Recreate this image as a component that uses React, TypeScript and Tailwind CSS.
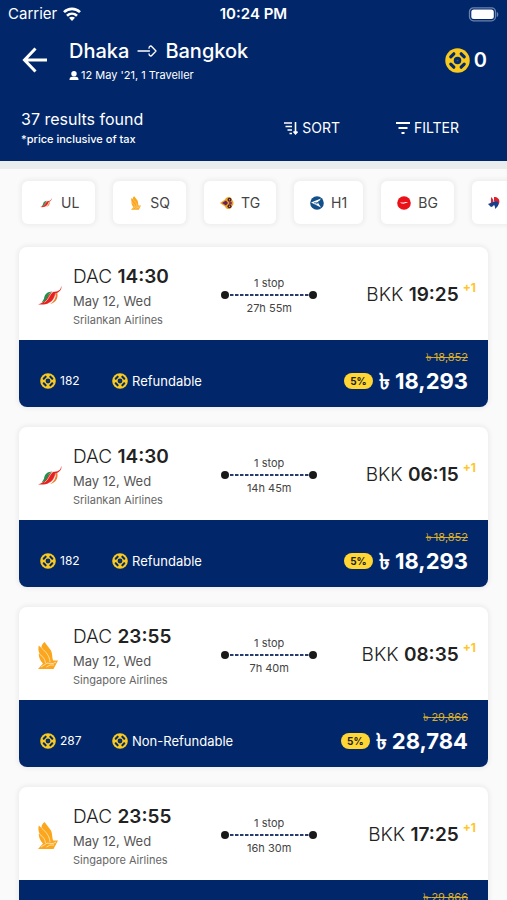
import React from "react";

type Flight = {
  id: number;
  airline: "Srilankan Airlines" | "Singapore Airlines";
  departs: string;
  arrives: string;
  duration: string;
  points: string;
  refund: string;
  oldPrice: string;
  price: string;
};

const flights: Flight[] = [
  { id: 1, airline: "Srilankan Airlines", departs: "14:30", arrives: "19:25", duration: "27h 55m", points: "182", refund: "Refundable", oldPrice: "18,852", price: "18,293" },
  { id: 2, airline: "Srilankan Airlines", departs: "14:30", arrives: "06:15", duration: "14h 45m", points: "182", refund: "Refundable", oldPrice: "18,852", price: "18,293" },
  { id: 3, airline: "Singapore Airlines", departs: "23:55", arrives: "08:35", duration: "7h 40m", points: "287", refund: "Non-Refundable", oldPrice: "29,866", price: "28,784" },
  { id: 4, airline: "Singapore Airlines", departs: "23:55", arrives: "17:25", duration: "16h 30m", points: "287", refund: "Non-Refundable", oldPrice: "29,866", price: "28,784" },
];

function Coin({ className }: { className: string }) {
  return (
    <svg viewBox="0 0 26 26" className={className} aria-hidden="true">
      <circle cx="13" cy="13" r="12.7" fill="#f9c920" />
      <circle cx="13" cy="13" r="3.9" fill="#032a6b" />
      <g stroke="#032a6b" strokeWidth="3.3" strokeLinecap="round">
        <path d="M6 9.2 9.2 6M16.8 6 20 9.2M20 16.8 16.8 20M9.2 20 6 16.8" />
      </g>
      <circle cx="13" cy="13" r="0.9" fill="#3d5276" />
    </svg>
  );
}

function SrilankanLogo({ className }: { className: string }) {
  return (
    <svg viewBox="0 0 26 22" className={className} aria-hidden="true">
      <path d="M25 0C25 4 23 6 18 6.500 12 7 11 11 8 15 6 18 3 19 0 20c8 1 14-1 17-6 2-4 2-6 5-7 3-2 4-4 3-7Z" fill="#e42320" />
      <path d="M16 6C10 6 7 9 6.500 14L4 18c4-1 6-4 7-7 1-3 3-4 5-5Z" fill="#219150" />
      <path d="M19 8c1 5-2 9-6 12 6-2 9-6 8-12Z" fill="#f0792b" />
      <path d="M16 7c-4 2-4 8-9 11" fill="none" stroke="#fff" strokeWidth="0.6" />
      <path d="M19 8c-1 5-3 9-8 11" fill="none" stroke="#fff" strokeWidth="0.4" />
    </svg>
  );
}

function SingaporeLogo({ className }: { className: string }) {
  return (
    <svg viewBox="0 0 20 27" className={className} aria-hidden="true">
      <path d="M6.500 0 13 8.500C14.500 12 14 15 15 18.500l5 0L15.500 27H0l5-5.500C2.500 19 .5 15 .8 11.500L2 12.500C.3 9.500 0 6.500.8 3.500L3.500 6C3.300 3.500 4.500 1.500 6.500 0Z" fill="#fba61c" />
      <g fill="none" stroke="#fff3dc" strokeWidth="0.7">
        <path d="M3.500 6c5 4.500 8 8 8.500 14M2 12.500c3.500 2.500 5 5 5.500 8.500M3 25l6-3.800 6 .3 3-1.500M8.500 25l3.500-2h4" />
      </g>
    </svg>
  );
}

function ThaiLogo() {
  return (
    <svg viewBox="0 0 14 14" className="size-3.5" aria-hidden="true">
      <path d="M0 7 5 3.500C6 0 12 0 12 4c2 1 2 5 0 6 0 4-6 4-7 .5Z" fill="#e8a522" />
      <path d="M2 7 6 4.500 8 7 6 9.500Z" fill="#6a1f63" />
      <circle cx="9.500" cy="3.700" r="2" fill="#4b1a3e" />
      <circle cx="9.500" cy="10.300" r="2" fill="#4b1a3e" />
      <circle cx="10.500" cy="7" r="1.500" fill="#8c2c58" />
      <circle cx="9.500" cy="3.700" r="0.700" fill="#e8a522" />
      <circle cx="9.500" cy="10.300" r="0.700" fill="#e8a522" />
    </svg>
  );
}

function HahnLogo() {
  return (
    <svg viewBox="0 0 14 14" className="size-3.5" aria-hidden="true">
      <circle cx="7" cy="7" r="6.800" fill="#12508c" />
      <path d="M1 6.500 11 2.500 8 6.700 11 11.500Z" fill="#fff" />
      <path d="M4 6.800h4M6 8.500 9 5" stroke="#12508c" strokeWidth="0.8" />
    </svg>
  );
}

function BimanLogo() {
  return (
    <svg viewBox="0 0 14 14" className="size-3.5" aria-hidden="true">
      <circle cx="7" cy="7" r="6.800" fill="#ea1218" />
      <path d="M3 6.800c1.500-.8 2.500 0 3.500-.2s2-.8 4.500-.4c-1 .3-2 .8-3 1-1 .3-1.500.6-2.500.4C4.500 7.600 4 7 3 6.800Z" fill="#fff" />
    </svg>
  );
}

function MalaysiaLogo() {
  return (
    <svg viewBox="0 0 12 12" className="size-3" aria-hidden="true">
      <path d="M3 0c2 2 3 3 2 6L2 9c1-3 1-5 1-9Z" fill="#d22635" />
      <path d="M6 0c6 0 7 6 3 9 1-3 0-5-3-5Z" fill="#e11e2b" />
      <path d="M0 7c4-1 6-3 8-3 4 1 3 5-1 8 0-2 0-3-1-4-1 1-2 2-3 2Z" fill="#17418f" />
    </svg>
  );
}

const airlines: { code: string; logo: React.ReactNode }[] = [
  { code: "UL", logo: <SrilankanLogo className="mr-0.5 ml-0.5 h-2.5 w-3" /> },
  { code: "SQ", logo: <SingaporeLogo className="mr-0.5 ml-0.5 h-3.5 w-2.5" /> },
  { code: "TG", logo: <ThaiLogo /> },
  { code: "H1", logo: <HahnLogo /> },
  { code: "BG", logo: <BimanLogo /> },
  { code: "MH", logo: <MalaysiaLogo /> },
];

function StatusBar() {
  return (
    <div className="grid h-7 grid-cols-3 items-center px-2 text-[15px]">
      <div className="flex items-center gap-1.5">
        <span>Carrier</span>
        <svg viewBox="0 0 18 14" className="h-3.5 w-[18px]" fill="none" stroke="#fff" strokeWidth="2.6" aria-hidden="true">
          <path d="M1 5.200C5.500.7 12.500.7 17 5.200M4 8.800c2.900-2.800 7.100-2.800 10 0" />
          <path d="m9 14-3-3.200c1.700-1.500 4.300-1.500 6 0Z" fill="#fff" stroke="none" />
        </svg>
      </div>
      <span className="text-center font-semibold">10:24 PM</span>
      <svg viewBox="0 0 31 15" className="h-[15px] w-[31px] justify-self-end" aria-hidden="true">
        <rect x="1.500" y="0.800" width="26" height="13" rx="4" fill="none" stroke="#6c84ad" strokeWidth="1.300" />
        <rect x="3.300" y="2.500" width="22.500" height="9.600" rx="2.500" fill="#fff" />
        <path d="M28.800 5c2 .6 2 4.400 0 5Z" fill="#6c84ad" />
      </svg>
    </div>
  );
}

function Header() {
  return (
    <header className="h-[161px] bg-[#01276a] text-white">
      <StatusBar />
      <div className="flex h-16 items-center pr-5 pl-[22px]">
        <button type="button" aria-label="Back" className="w-[47px]">
          <svg viewBox="0 0 26 26" className="size-[26px]" fill="none" stroke="#fff" strokeWidth="3" aria-hidden="true">
            <path d="M25 13H3M13.500 1.500 2.500 13l11 11.500" />
          </svg>
        </button>
        <div className="flex-1">
          <h1 className="flex items-center gap-2 text-xl leading-7 font-medium">
            Dhaka
            <svg viewBox="0 0 20 12" className="h-3 w-5" fill="none" stroke="#fff" strokeWidth="1.300" strokeLinecap="round" role="img" aria-label="to">
              <path d="M1 6h11.500M12 3.200C12 .8 14 .4 15.200 2L19 6l-3.800 4c-1.200 1.600-3.200 1.200-3.200-1.200" strokeLinejoin="round" />
            </svg>
            <span>Bangkok</span>
          </h1>
          <p className="flex items-center gap-0.5 pt-0.5 text-[11px] leading-4">
            <svg viewBox="0 0 10 9" className="h-[9px] w-2.5" fill="#fff" aria-hidden="true">
              <circle cx="5" cy="2.700" r="2.700" />
              <path d="M.5 9C.5 6 2 5.800 5 5.800S9.500 6 9.500 9Z" />
            </svg>
            12 May '21, 1 Traveller
          </p>
        </div>
        <div className="flex items-center gap-1">
          <Coin className="size-[25px]" />
          <span className="text-xl font-semibold">0</span>
        </div>
      </div>
      <div className="flex items-center pt-4 pr-12 pl-[21px]">
        <div className="flex-1">
          <p className="text-base leading-[22px]">37 results found</p>
          <p className="text-[11px] leading-[18px] font-medium">*price inclusive of tax</p>
        </div>
        <button type="button" className="mr-14 flex items-center gap-1 text-sm">
          <svg viewBox="0 0 14 13" className="h-[13px] w-3.5" fill="none" stroke="#fff" strokeWidth="1.600" aria-hidden="true">
            <path d="M0 1h8M1.500 4.500H8M3.500 8H8M5.500 11.500H8M11.500 0v12M9.500 9.500l2 2.300 2-2.300" />
          </svg>
          SORT
        </button>
        <button type="button" className="flex items-center gap-1 text-sm">
          <svg viewBox="0 0 14 12" className="h-3 w-3.5" fill="none" stroke="#fff" strokeWidth="1.800" aria-hidden="true">
            <path d="M0 1h14M2.500 6h9M5.500 11h3" />
          </svg>
          FILTER
        </button>
      </div>
    </header>
  );
}

function FlightCard({ flight }: { flight: Flight }) {
  return (
    <article className="overflow-hidden rounded-lg bg-white shadow-[0_0_4px_2px_rgba(0,0,0,0.05)]">
      <div className="grid h-[93px] grid-cols-[54px_154fr_96px_165fr] items-center pr-3">
        <div className="pt-1 pl-[19px]">
          {flight.airline === "Srilankan Airlines" ? (
            <SrilankanLogo className="h-[22px] w-6" />
          ) : (
            <SingaporeLogo className="h-[27px] w-5" />
          )}
        </div>
        <div className="pt-1 whitespace-nowrap">
          <p className="text-[19px] leading-7 font-light text-[#222]">
            DAC <span className="font-semibold">{flight.departs}</span>
          </p>
          <p className="text-[13px] leading-5 text-[#555]">May 12, Wed</p>
          <p className="text-[11px] leading-[18px] text-[#666]">{flight.airline}</p>
        </div>
        <div className="pt-1 text-center text-[11px] leading-4 text-[#444]">
          <p>1 stop</p>
          <div className="flex h-2 items-center">
            <span className="size-2 rounded-full bg-[#191919]" />
            <svg className="h-0.5 flex-1" aria-hidden="true">
              <line x1="1" y1="1" x2="100%" y2="1" stroke="#263c6d" strokeWidth="2" strokeDasharray="3.500 1.500" />
            </svg>
            <span className="size-2 rounded-full bg-[#191919]" />
          </div>
          <p className="pt-px">{flight.duration}</p>
        </div>
        <div className="flex items-center justify-end gap-1 pt-0.5 whitespace-nowrap">
          <p className="text-[19px] leading-7 font-light text-[#222]">
            BKK <span className="font-semibold">{flight.arrives}</span>
          </p>
          <span className="pb-3.5 text-xs font-bold text-[#ffc629]">+1</span>
        </div>
      </div>
      <div className="flex h-[67px] items-end bg-[#01276a] pr-5 pb-3 pl-[21px] text-white">
        <div className="flex w-[72px] items-center gap-1 pb-1 text-xs leading-5">
          <Coin className="size-4" />
          {flight.points}
        </div>
        <div className="flex flex-1 items-center gap-1 pb-1 text-[13px] leading-5">
          <Coin className="size-4" />
          {flight.refund}
        </div>
        <div className="flex flex-col items-end">
          <s className="text-[11px] leading-3 text-[#d9ad2b]">৳ {flight.oldPrice}</s>
          <div className="flex items-center gap-1.5 pt-1">
            <span className="rounded-full bg-[#ffd633] px-1.5 text-[10px] leading-4 font-bold text-[#222]">5%</span>
            <strong className="text-[22px] leading-7 font-bold">৳ {flight.price}</strong>
          </div>
        </div>
      </div>
    </article>
  );
}

export default function App() {
  return (
    <div className="h-screen overflow-hidden bg-[#fafafa] font-['Inter','Noto_Sans',sans-serif]">
      <Header />
      <nav aria-label="Airlines" className="flex gap-[18px] overflow-hidden border-t-8 border-[#e9eded] px-[22px] pt-3 pb-[23px]">
        {airlines.map((airline) => (
          <button
            key={airline.code}
            type="button"
            className="flex h-[43px] shrink-0 items-center gap-[7px] rounded-md bg-white px-4 text-sm text-[#444] shadow-[0_0_4px_2px_rgba(0,0,0,0.05)]"
          >
            {airline.logo}
            {airline.code}
          </button>
        ))}
      </nav>
      <main className="flex flex-col gap-5 px-[19px]">
        {flights.map((flight) => (
          <FlightCard key={flight.id} flight={flight} />
        ))}
      </main>
    </div>
  );
}
